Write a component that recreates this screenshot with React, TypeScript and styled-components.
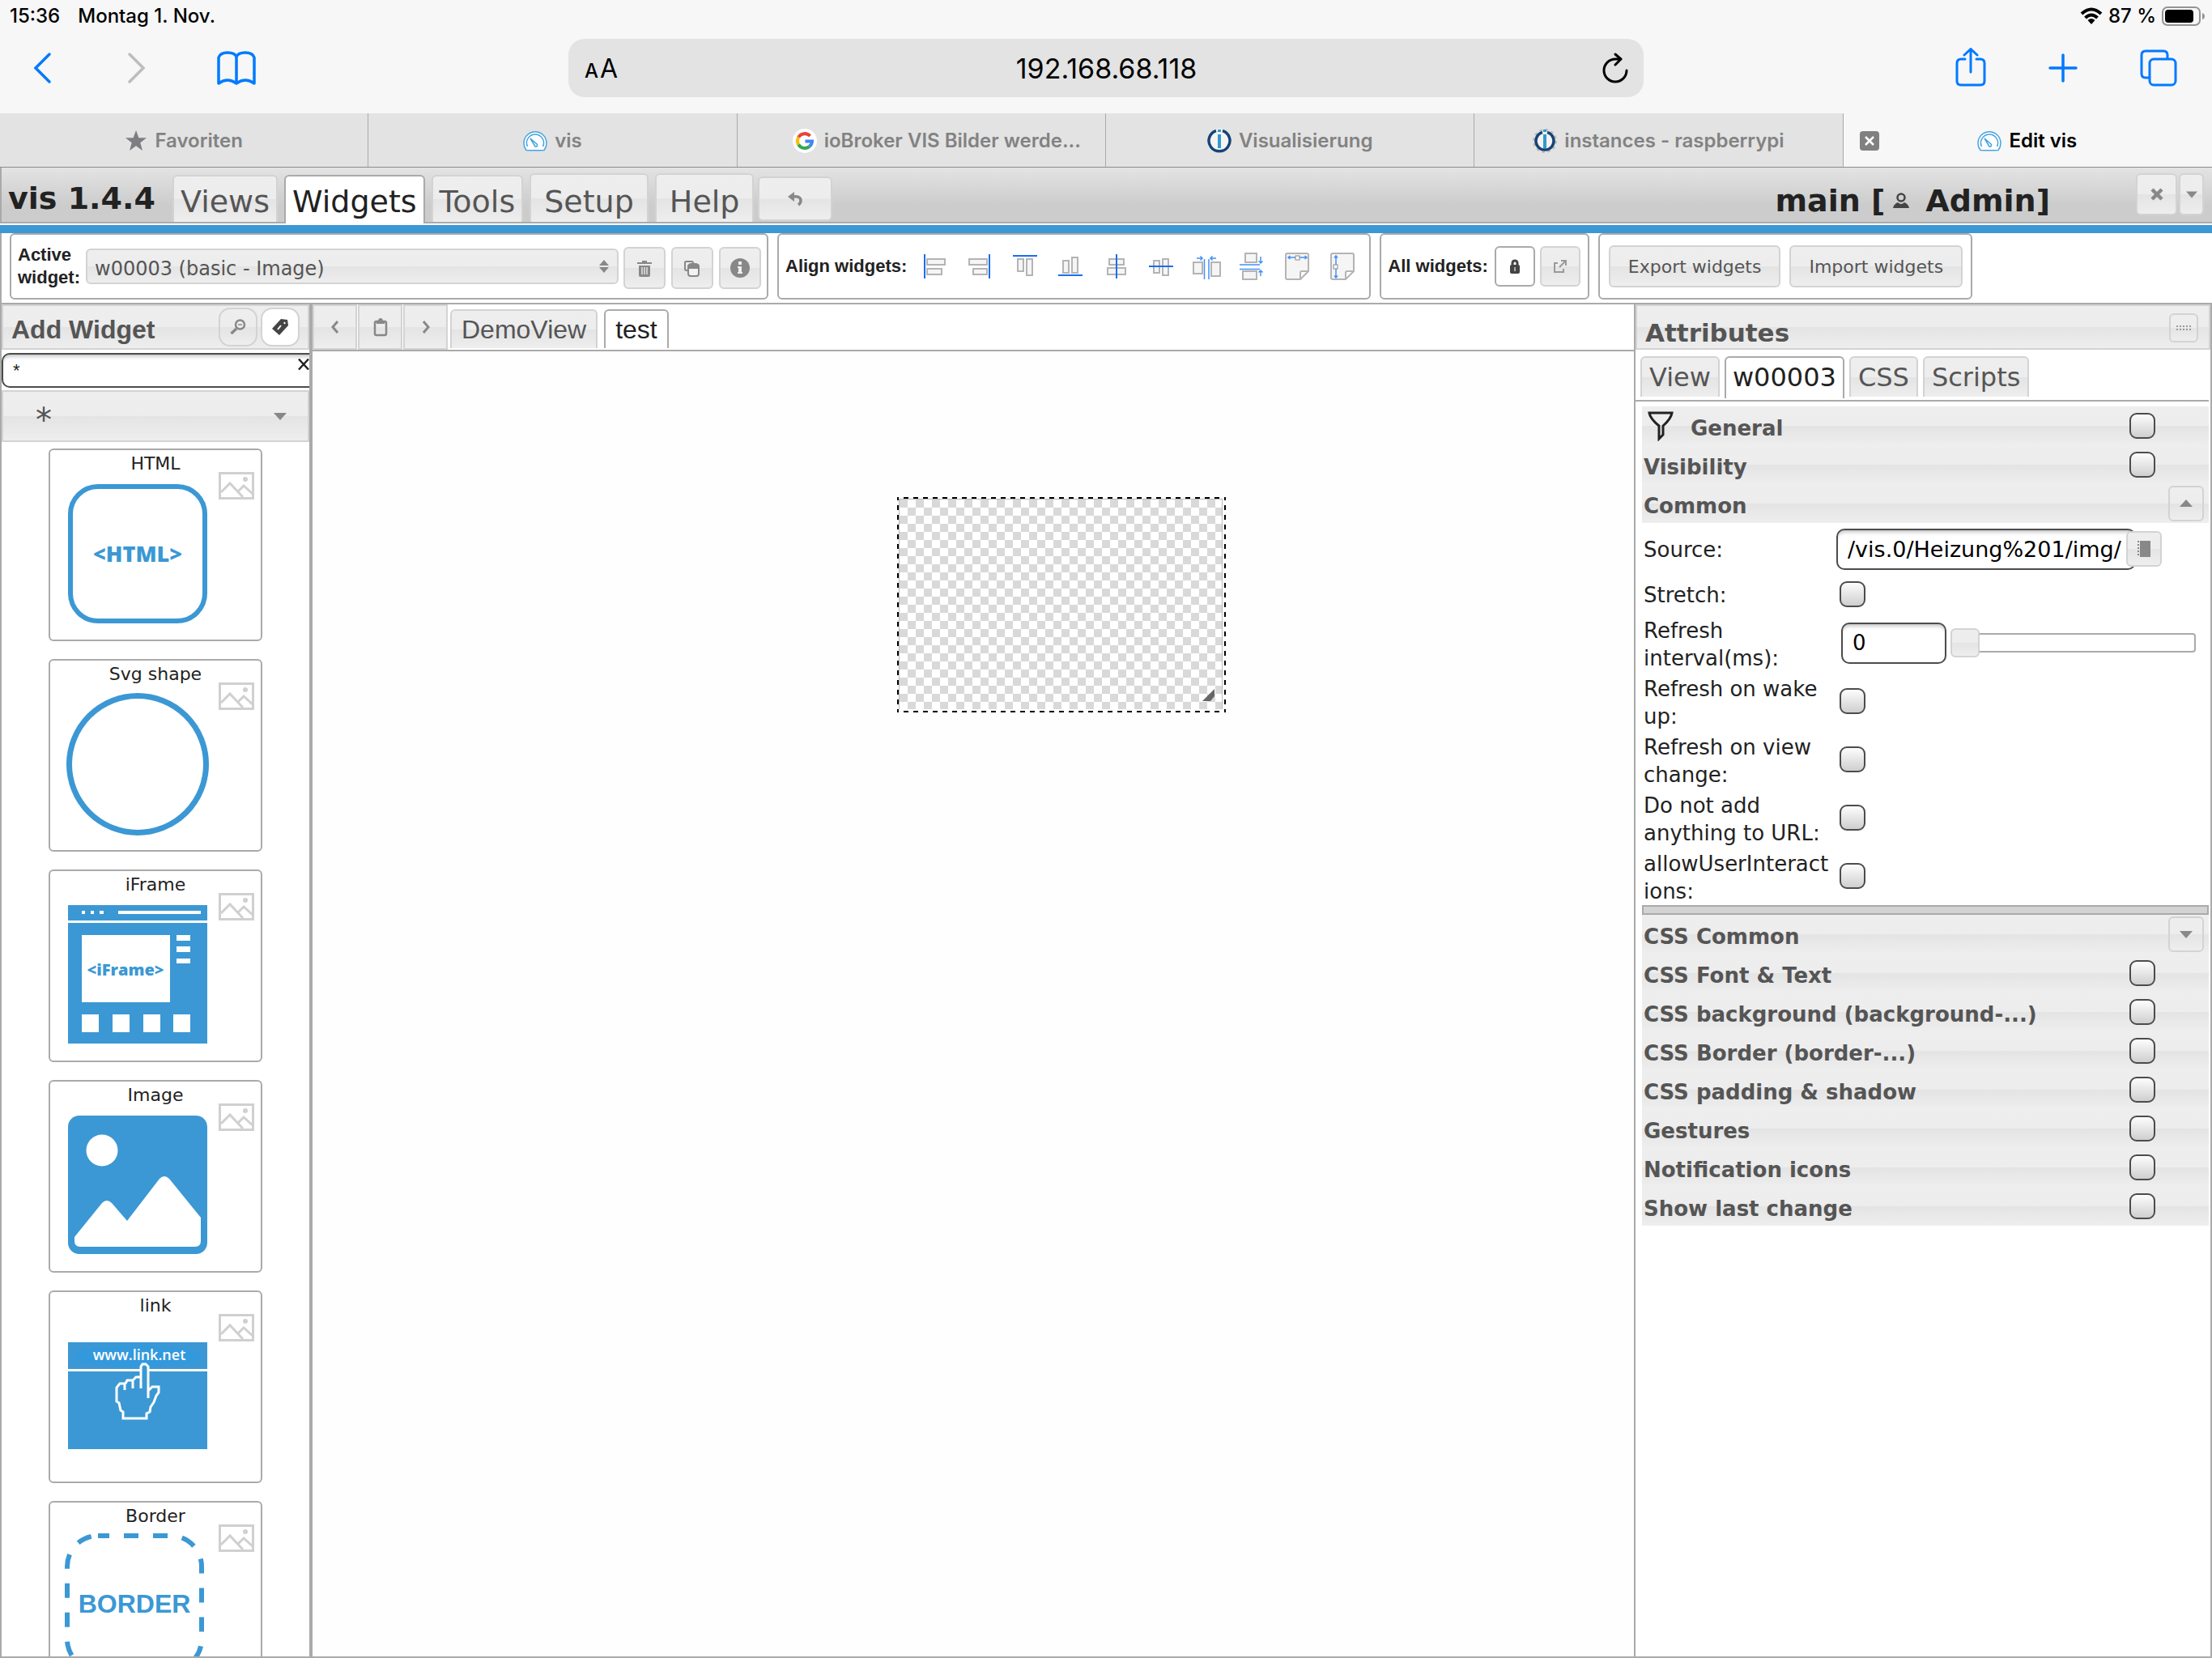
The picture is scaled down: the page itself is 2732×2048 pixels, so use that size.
import React from "react";
import styled, { createGlobalStyle, css } from "styled-components";

const verdana = `"DejaVu Sans", Verdana, sans-serif`;
const arial = `"Liberation Sans", Arial, sans-serif`;
const system = `Inter, "Noto Sans", sans-serif`;
const blue = "#007aff";
const brand = "#3b98d4";
const line = "#aaaaaa";
const softLine = "#d3d3d3";
const glass = "linear-gradient(#eeeeee 0%, #ededed 49%, #e4e4e4 51%, #eeeeee 100%)";

const GlobalStyle = createGlobalStyle`
  *, *::before, *::after { box-sizing: border-box; }
  body { margin: 0; background: #ffffff; font-family: ${verdana}; color: #222222; }
  button, input, select { margin: 0; font: inherit; color: inherit; }
  svg { display: block; flex: none; }
`;

const Page = styled.div`
  display: flex;
  flex-direction: column;
  height: 100vh;
  overflow: hidden;
`;

/* ---------- browser chrome ---------- */

const StatusBar = styled.div`
  display: flex;
  align-items: center;
  justify-content: space-between;
  height: 40px;
  padding: 0 8px 0 12px;
  background: #f7f7f7;
  color: #000000;
  font: 500 24px/40px ${system};
`;

const StatusGroup = styled.div<{ $gap: number }>`
  display: flex;
  align-items: center;
  gap: ${(p) => p.$gap}px;
`;

const BrowserBar = styled.div`
  display: grid;
  grid-template-columns: 1fr minmax(0, 1328px) 1fr;
  align-items: center;
  padding: 8px 0 20px;
  background: #f7f7f7;
`;

const BrowserActions = styled.div<{ $end?: boolean }>`
  display: flex;
  align-items: center;
  gap: ${(p) => (p.$end ? 77 : 60)}px;
  justify-content: ${(p) => (p.$end ? "flex-end" : "flex-start")};
  padding: ${(p) => (p.$end ? "0 43px 0 0" : "0 0 0 22px")};
`;

const PlainButton = styled.button`
  display: flex;
  align-items: center;
  justify-content: center;
  padding: 0;
  border: 0;
  background: none;
`;

const AddressBar = styled.div`
  display: grid;
  grid-template-columns: 60px 1fr 60px;
  align-items: center;
  height: 72px;
  padding: 0 19px 0 20px;
  border-radius: 20px;
  background: #e3e3e3;
  color: #000000;
  font-family: ${system};
`;

const TextSize = styled(PlainButton)`
  justify-content: flex-start;
  align-items: baseline;
  gap: 2px;
  font-size: 32px;
  small { font-size: 24px; font-weight: 500; }
`;

const ReloadButton = styled(PlainButton)`
  justify-content: flex-end;
`;

const AddressInput = styled.input`
  width: 100%;
  padding: 0;
  border: 0;
  outline: 0;
  background: transparent;
  text-align: center;
  font-size: 34px;
`;

const BrowserTabs = styled.nav`
  display: grid;
  grid-template-columns: repeat(6, 1fr);
  border-bottom: 1px solid #8c8c8c;
`;

const BrowserTab = styled.div<{ $active?: boolean; $long?: boolean }>`
  display: grid;
  grid-template-columns: 1fr auto 1fr;
  align-items: center;
  height: 66px;
  padding: ${(p) => (p.$long ? "2px 20px 0 58px" : "2px 20px 0")};
  border-right: 1px solid ${(p) => (p.$active ? "transparent" : "#aaaaaa")};
  background: ${(p) => (p.$active ? "#f7f7f7" : "#e3e3e3")};
  color: ${(p) => (p.$active ? "#000000" : "#828282")};
  font: 600 24px/32px ${system};
`;

const TabLink = styled.a`
  display: flex;
  grid-column: 2;
  align-items: center;
  gap: 9px;
  color: inherit;
  text-decoration: none;
  white-space: nowrap;
`;

const TabClose = styled.button`
  display: flex;
  align-items: center;
  justify-content: center;
  grid-row: 1;
  width: 24px;
  height: 24px;
  padding: 0;
  border: 0;
  border-radius: 4px;
  background: #808080;
`;

/* ---------- editor header ---------- */

const Header = styled.header`
  display: flex;
  align-items: flex-end;
  height: 69px;
  padding: 0 10px 0 8px;
  border-left: 2px solid ${line};
  border-bottom: 2px solid ${line};
  background: linear-gradient(#e3e3e3, #cccccc 70%, #cccccc);
`;

const Brand = styled.h1`
  width: 203px;
  margin: 0;
  padding-bottom: 8px;
  font-size: 38px;
  line-height: 42px;
  white-space: nowrap;
`;

const MenuTabs = styled.nav`
  display: flex;
  align-items: flex-end;
  gap: 8px;
`;

const tabSkin = css<{ $active?: boolean }>`
  border: 2px solid ${(p) => (p.$active ? line : softLine)};
  border-bottom: 0;
  border-radius: 6px 6px 0 0;
  background: ${(p) => (p.$active ? "#ffffff" : glass)};
  color: ${(p) => (p.$active ? "#212121" : "#555555")};
  white-space: nowrap;
`;

const MenuTab = styled.button<{ $active?: boolean; $wide?: boolean }>`
  ${tabSkin}
  height: ${(p) => (p.$wide ? 60 : p.$active ? 60 : 58)}px;
  margin-bottom: ${(p) => (p.$active ? -2 : 0)}px;
  padding: ${(p) => (p.$wide ? "8px 16px 0" : p.$active ? "4px 8px 0" : "6px 8px 0")};
  font-size: 38px;
  line-height: 48px;
`;

const GlassButton = styled.button<{ $w?: number; $h: number; $on?: boolean }>`
  display: flex;
  align-items: center;
  justify-content: center;
  flex: none;
  width: ${(p) => (p.$w ? p.$w + "px" : "auto")};
  height: ${(p) => p.$h}px;
  padding: 0;
  border: 2px solid ${(p) => (p.$on ? line : softLine)};
  border-radius: 6px;
  background: ${(p) => (p.$on ? "#ffffff" : glass)};
  color: #555555;
`;

const UndoSlot = styled.div`
  margin-left: 5px;
  padding-bottom: 1px;
`;

const Project = styled.div`
  display: flex;
  align-items: center;
  gap: 9px;
  margin-left: auto;
  margin-right: 106px;
  padding-bottom: 5px;
  font-size: 38px;
  font-weight: bold;
  line-height: 42px;
  white-space: nowrap;
`;

const UserName = styled.span`
  padding-left: 10px;
`;

const SplitButton = styled.div`
  display: flex;
  gap: 2px;
  padding-bottom: 8px;
`;

const BlueBar = styled.div`
  height: 10px;
  margin-top: 2px;
  background: ${brand};
`;

/* ---------- widget tool bar ---------- */

const ToolRow = styled.div`
  display: flex;
  gap: 11px;
  height: 88px;
  padding: 0 10px 4px;
  border-left: 2px solid ${line};
  border-bottom: 2px solid ${line};
`;

const ToolGroup = styled.fieldset<{ $gap: number; $pad: string }>`
  display: flex;
  align-items: center;
  gap: ${(p) => p.$gap}px;
  min-width: 0;
  margin: 0;
  padding: ${(p) => p.$pad};
  border: 2px solid ${line};
  border-radius: 6px;
`;

const ToolLabel = styled.label<{ $w?: number }>`
  width: ${(p) => (p.$w ? p.$w + "px" : "auto")};
  font: bold 22px/28px ${arial};
  white-space: ${(p) => (p.$w ? "normal" : "nowrap")};
`;

const SelectWrap = styled.div`
  display: flex;
  align-items: center;
  position: relative;
`;

const SelectArrow = styled.span<{ $right: number }>`
  position: absolute;
  right: ${(p) => p.$right}px;
  pointer-events: none;
`;

const WidgetSelect = styled.select`
  appearance: none;
  width: 658px;
  height: 44px;
  padding: 6px 40px 0 9px;
  border: 2px solid ${softLine};
  border-radius: 6px;
  background: ${glass};
  color: #555555;
  font-size: 24px;
`;

const ButtonRow = styled.div<{ $gap: number; $top?: number }>`
  display: flex;
  gap: ${(p) => p.$gap}px;
  padding-top: ${(p) => p.$top ?? 0}px;
`;

const TextButton = styled(GlassButton)`
  padding: 0 22px;
  font-size: 22px;
`;

/* ---------- workspace ---------- */

const Workspace = styled.main`
  display: grid;
  grid-template-columns: 386px minmax(0, 1fr) 714px;
  flex: 1;
  min-height: 0;
  border-bottom: 2px solid ${line};
`;

const LeftPanel = styled.aside`
  display: flex;
  flex-direction: column;
  min-height: 0;
  overflow: hidden;
  border-left: 2px solid ${line};
  border-right: 4px solid ${line};
`;

const PanelHeader = styled.div<{ $pad: string }>`
  display: flex;
  align-items: center;
  flex: none;
  height: 56px;
  padding: ${(p) => p.$pad};
  border: 2px solid ${softLine};
  background: ${glass};
  color: #555555;
`;

const PanelTitle = styled.h2<{ $font: string; $size: number; $top: number }>`
  margin: 0 auto 0 0;
  padding-top: ${(p) => p.$top}px;
  font: bold ${(p) => p.$size}px/36px ${(p) => p.$font};
`;

const RoundButton = styled(GlassButton)<{ $pressed?: boolean }>`
  border-radius: 14px;
  background: ${(p) => (p.$pressed ? "#ffffff" : glass)};
`;

const SearchBox = styled.div`
  position: relative;
  flex: none;
  height: 50px;
  padding-top: 4px;
  overflow: hidden;
`;

const fieldSkin = css`
  border: 2px solid #4c4c4c;
  border-radius: 10px;
  outline: 0;
  background: #ffffff;
  box-shadow: inset 0 5px 5px -3px #bbbbbb;
`;

const SearchInput = styled.input`
  ${fieldSkin}
  width: calc(100% + 16px);
  height: 43px;
  padding: 0 12px;
  font: 22px/36px ${arial};
`;

const ClearButton = styled(PlainButton)`
  position: absolute;
  top: 10px;
  right: 0;
`;

const GroupSelect = styled.select`
  appearance: none;
  width: 100%;
  height: 64px;
  padding: 10px 40px 0 40px;
  border: 2px solid ${softLine};
  border-radius: 0;
  background: ${glass};
  color: #555555;
  font-size: 40px;
`;

const CardList = styled.div`
  display: flex;
  flex-direction: column;
  align-items: center;
  gap: 22px;
  flex: 1;
  min-height: 0;
  padding-top: 8px;
  overflow: hidden;
`;

const Card = styled.article`
  flex: none;
  width: 264px;
  height: 238px;
  padding-top: 3px;
  border: 2px solid ${line};
  border-radius: 6px;
`;

const CardTitle = styled.h3`
  margin: 0;
  font-size: 22px;
  font-weight: normal;
  line-height: 28px;
  text-align: center;
`;

const CardBody = styled.div`
  display: flex;
  gap: 10px;
  padding: 0 10px 0 18px;
  & > svg:first-child { margin-top: 7px; }
  & > svg:last-child { margin-top: -4px; }
`;

const Center = styled.section`
  display: flex;
  flex-direction: column;
  min-width: 0;
`;

const ViewBar = styled.div`
  display: flex;
  align-items: flex-start;
  height: 58px;
  border-bottom: 2px solid ${line};
`;

const ViewButton = styled(GlassButton)`
  border-radius: 0;
  margin-right: 1px;
`;

const ViewTabs = styled.nav`
  display: flex;
  gap: 8px;
  padding: 6px 0 0 2px;
`;

const ViewTab = styled.button<{ $active?: boolean }>`
  ${tabSkin}
  height: 48px;
  padding: 0 12px;
  font: 32px/46px ${arial};
`;

const Canvas = styled.div`
  position: relative;
  flex: 1;
  background: #fefefe;
`;

const dashX = "repeating-linear-gradient(90deg, #000000 0 6px, transparent 6px 12px)";
const dashY = "repeating-linear-gradient(#000000 0 6px, transparent 6px 12px)";

const SelectedWidget = styled.div`
  position: absolute;
  left: 722px;
  top: 180px;
  width: 406px;
  height: 266px;
  padding: 2px 4px 4px 2px;
  background:
    ${dashX} -4px 0 / 420px 2px no-repeat,
    ${dashX} -4px 100% / 420px 2px no-repeat,
    ${dashY} 0 -2px / 2px 276px no-repeat,
    ${dashY} 100% -2px / 2px 276px no-repeat;
`;

const Checker = styled.div`
  display: flex;
  align-items: flex-end;
  justify-content: flex-end;
  height: 100%;
  padding: 10px 9px;
  border: 1px solid #bbbbbb;
  border-bottom: 0;
  background: repeating-conic-gradient(#ffffff 0 25%, #d9d9d9 0 50%) 0 0 / 20px 20px;
`;

/* ---------- attributes ---------- */

const RightPanel = styled.aside`
  border-left: 2px solid ${line};
  border-right: 2px solid ${line};
`;

const AttributeTabs = styled.nav`
  display: flex;
  gap: 6px;
  height: 64px;
  margin-right: 2px;
  padding: 8px 0 0 6px;
  border-bottom: 2px solid ${line};
`;

const AttributeTab = styled.button<{ $active?: boolean }>`
  ${tabSkin}
  height: ${(p) => (p.$active ? 52 : 50)}px;
  padding: ${(p) => (p.$active ? "0 8px 2px" : "0 9px")};
  font-size: 32px;
  line-height: 48px;
`;

const Sections = styled.div`
  padding: 6px 2px 0 8px;
  font-size: 26px;
`;

const SectionRow = styled.div`
  display: flex;
  align-items: center;
  height: 48px;
  padding: 0 6px 0 2px;
  background: ${glass};
  color: #555555;
  font-weight: bold;
`;

const SectionLabel = styled.label`
  flex: 1;
  padding-top: 6px;
  line-height: 34px;
`;

const Funnel = styled.span`
  padding: 0 20px 0 4px;
`;

const CheckBox = styled.input`
  appearance: none;
  flex: none;
  width: 32px;
  height: 32px;
  border: 2px solid #4c4c4c;
  border-radius: 9px;
  background: linear-gradient(#fdfdfd, #cfcfcf);
`;

const SectionCheck = styled(CheckBox)`
  margin-right: 60px;
`;

const FieldRow = styled.div<{ $h: number }>`
  display: grid;
  grid-template-columns: 238px 1fr;
  align-items: center;
  min-height: ${(p) => p.$h}px;
  padding-left: 2px;
`;

const FieldLabel = styled.label<{ $two?: boolean }>`
  max-width: 232px;
  padding-top: ${(p) => (p.$two ? 4 : 1)}px;
  line-height: 34px;
  overflow-wrap: anywhere;
`;

const FieldControls = styled.div<{ $left: number }>`
  display: flex;
  align-items: center;
  padding-left: ${(p) => p.$left}px;
`;

const SourceInput = styled.input`
  ${fieldSkin}
  width: 370px;
  height: 51px;
  padding: 0 12px 0 12px;
  color: #000000;
  font-size: 27px;
`;

const BrowseSlot = styled.div`
  position: relative;
  margin-left: -12px;
`;

const NumberInput = styled.input`
  ${fieldSkin}
  width: 130px;
  height: 51px;
  margin-right: 5px;
  padding: 0 12px;
  color: #000000;
`;

const Slider = styled.input`
  appearance: none;
  flex: 1;
  min-width: 0;
  height: 36px;
  margin-right: 16px;
  background: transparent;
  &::-webkit-slider-runnable-track {
    height: 24px;
    border: 2px solid ${line};
    border-radius: 4px;
    background: #ffffff;
  }
  &::-webkit-slider-thumb {
    appearance: none;
    width: 36px;
    height: 36px;
    margin: -8px 0 0 -2px;
    border: 2px solid ${softLine};
    border-radius: 6px;
    background: ${glass};
  }
`;

const Divider = styled.hr`
  height: 12px;
  margin: 0;
  border: 2px solid ${line};
  background: ${softLine};
`;

/* ---------- drawings ---------- */

const Gauge = () => (
  <svg width="30" height="26" viewBox="0 0 30 26" fill="none" stroke="#45a3e0" strokeWidth="1.5">
    <path fill="#ffffff" d="M4 24.500A14 14 0 1 1 26 24.500Q15 25 4 24.500Z" />
    <path d="M5.500 20A10.500 10.500 0 1 1 24.500 20" />
    <path d="M9 10L17.500 17.500Q18 20.500 15 20Z" />
  </svg>
);

const Google = () => (
  <svg width="30" height="30" viewBox="0 0 30 30" fill="none" strokeWidth="4">
    <circle cx="15" cy="15" r="15" fill="#ffffff" />
    <path stroke="#ea4335" d="M7.200 10.500A9 9 0 0 1 21.500 9" />
    <path stroke="#fbbc05" d="M7.200 10.500A9 9 0 0 0 7.200 19.500" />
    <path stroke="#34a853" d="M7.200 19.500A9 9 0 0 0 20.800 21.900" />
    <path stroke="#4285f4" d="M20.800 21.900A9 9 0 0 0 24 15.500H15.500" />
  </svg>
);

const IoBroker = ({ gear }: { gear?: boolean }) => (
  <svg width="30" height="30" viewBox="0 0 30 30" fill="none">
    {gear && <circle cx="15" cy="15" r="13.500" stroke="#bcbcbc" strokeWidth="3" strokeDasharray="3.500 3.570" />}
    <circle cx="15" cy="15" r={gear ? 12.500 : 15} fill="#f4f4f4" />
    <path
      stroke="#164477"
      strokeWidth="3.500"
      d={gear ? "M12 4.500A11 11 0 1 0 18 4.500" : "M11 2.500A13 13 0 1 0 19 2.500"}
    />
    <path stroke="#3399cc" strokeWidth="4" d="M15 1V4M15 7V24" />
  </svg>
);

const ImageMark = () => (
  <svg width="44" height="34" viewBox="0 0 44 34" fill="none" stroke="#d0d0d0" strokeWidth="3">
    <rect x="1.500" y="1.500" width="41" height="31" />
    <path d="M3 25L14 14L30 31M24 24L31 17L42 27" />
    <circle cx="33" cy="9" r="3" fill="#d0d0d0" stroke="none" />
  </svg>
);

const art = { width: 180, height: 180, viewBox: "0 0 180 180" };
const artFont = `"Open Sans", "Noto Sans", sans-serif`;

const HtmlArt = () => (
  <svg {...art}>
    <rect x="7" y="7" width="166" height="166" rx="34" fill="none" stroke={brand} strokeWidth="6" />
    <text x="90" y="100" textAnchor="middle" fontFamily={artFont} fontWeight="800" fontSize="27" fill={brand}>
      &lt;HTML&gt;
    </text>
  </svg>
);

const CircleArt = () => (
  <svg {...art}>
    <circle cx="90" cy="90" r="84.500" fill="none" stroke={brand} strokeWidth="7" />
  </svg>
);

const FrameArt = () => (
  <svg {...art}>
    <path fill={brand} d="M4 4H176V23H4ZM4 26H176V175H4Z" />
    <path
      fill="#ffffff"
      d="M21 11h4v4h-4zM32 11h4v4h-4zM43 11h5v4h-5zM66 11h102v4h-102zM21 41h109v83h-109zM138 41h17v7h-17zM138 55h17v7h-17zM138 70h17v6h-17zM21 139h21v22h-21zM59 139h21v22h-21zM97 139h21v22h-21zM134 139h21v22h-21z"
    />
    <text x="75" y="91" textAnchor="middle" fontFamily={artFont} fontWeight="800" fontSize="20" fill={brand}>
      &lt;iFrame&gt;
    </text>
  </svg>
);

const PictureArt = () => (
  <svg {...art}>
    <rect x="4" y="4" width="172" height="171" rx="14" fill={brand} />
    <circle cx="46" cy="47" r="19.500" fill="#ffffff" />
    <path
      fill="#ffffff"
      d="M12 154L46 112Q52 106 58 112L77 134L117 82Q123 76 129 82L168 130V159Q168 166 161 166H19Q12 166 12 159Z"
    />
  </svg>
);

const LinkArt = () => (
  <svg {...art}>
    <path fill={brand} d="M4 24H176V57H4ZM4 60H176V156H4Z" />
    <ellipse cx="90" cy="41" rx="80" ry="13" fill="#3399dd" />
    <text x="92" y="46" textAnchor="middle" fontFamily={artFont} fontWeight="600" fontSize="18" fill="#ffffff">
      www.link.net
    </text>
    <path
      fill={brand}
      stroke="#ffffff"
      strokeWidth="3"
      d="M94 81V54L96 51H100L103 54V93M103 84L108 79H116V86L113 90L110 98L106 104L105 110L101 112V118H72V110L69 108L67 99L64 97V80L68 75H74V83M75 75L77 71H84V81M84 71L88 67H94"
    />
  </svg>
);

const BorderArt = () => (
  <svg {...art}>
    <rect
      x="3"
      y="3"
      width="166"
      height="166"
      rx="38"
      fill="none"
      stroke={brand}
      strokeWidth="6"
      strokeDasharray="18 18"
      strokeDashoffset="4"
    />
    <text x="86" y="98" textAnchor="middle" fontFamily={arial} fontWeight="bold" fontSize="32" fill={brand}>
      BORDER
    </text>
  </svg>
);

const alignBox = { fill: "#f5f5f5", stroke: "#b4b4b4", strokeWidth: 2 };
const sheet = "M4 4Q4 2 6 2H30Q32 2 32 4V24L22 34H6Q4 34 4 32ZM32 24H24Q22 24 22 26V34";
const alignTools: { name: string; grey: string; blue: string; thin?: boolean }[] = [
  { name: "Align left", grey: "M9 9H31V16H9ZM9 21H27V28H9Z", blue: "M6 3V33" },
  { name: "Align right", grey: "M5 9H27V16H5ZM10 21H27V28H10Z", blue: "M30 3V33" },
  { name: "Align top", grey: "M9 9H16V24H9ZM20 9H27V29H20Z", blue: "M3 5H33" },
  { name: "Align bottom", grey: "M9 11H16V26H9ZM20 7H27V26H20Z", blue: "M3 29H33" },
  { name: "Center horizontally", grey: "M10 9H28V16H10ZM8 20H30V28H8Z", blue: "M19 3V33" },
  { name: "Center vertically", grey: "M9 11H16V26H9ZM20 9H27V29H20Z", blue: "M3 18H33" },
  {
    name: "Distribute horizontally",
    grey: "M2 13H13V27H2ZM24 13H35V30H24Z",
    blue: "M15.500 9V34M21 9V34M6 8H13M10.500 5.500L13 8L10.500 10.500M30 8H23M25.500 5.500L23 8L25.500 10.500",
    thin: true,
  },
  {
    name: "Distribute vertically",
    grey: "M10 2H24V13H10ZM7 24H24V34H7Z",
    blue: "M3 16H28M3 21.500H28M29 6V14M26.500 11.500L29 14L31.500 11.500M29 30V23M26.500 25.500L29 23L31.500 25.500",
    thin: true,
  },
  { name: "Same width", grey: sheet, blue: "M7 7H30M9.500 5L7 7L9.500 9M27.500 5L30 7L27.500 9", thin: true },
  { name: "Same height", grey: sheet, blue: "M10 5V32M8 7.500L10 5L12 7.500M8 29.500L10 32L12 29.500", thin: true },
];

const glyph = "#888888";

const Trash = () => (
  <svg width="20" height="24" viewBox="0 0 20 24" fill={glyph}>
    <path d="M1 5H7V3H13V5H19V7H1ZM3 9H17V21Q17 23 15 23H5Q3 23 3 21Z" />
    <path d="M7 11V20M10 11V20M13 11V20" stroke="#e2e2e2" strokeWidth="1.500" />
  </svg>
);

const Copy = () => (
  <svg width="22" height="24" viewBox="0 0 22 24" fill="none" stroke={glyph} strokeWidth="2">
    <path d="M6 15H4Q2 15 2 13V5Q2 4 4 4H10Q12 4 12 6" />
    <rect x="6" y="8" width="13" height="14" rx="3" fill="#f2f2f2" />
    <path fill={glyph} stroke="none" d="M5 13V9Q7 6 9 6H16Q20 7 20 10V13Z" />
  </svg>
);

const Info = () => (
  <svg width="26" height="26" viewBox="0 0 26 26">
    <circle cx="13" cy="13" r="12" fill={glyph} />
    <path fill="#eeeeee" d="M11 5H15V9H11ZM10 11H15V18H16V20H10V18H11V13H10Z" />
  </svg>
);

const Undo = () => (
  <svg width="20" height="20" viewBox="0 0 20 20" fill="none">
    <path fill={glyph} d="M1 7L9 1V13Z" />
    <path stroke={glyph} strokeWidth="3.500" d="M8 7Q17 6 17 12Q17 15 14 17" />
  </svg>
);

const Triangle = ({ up, size = 16 }: { up?: boolean; size?: number }) => (
  <svg width={size} height="10" viewBox="0 0 16 10">
    <path fill={glyph} d={up ? "M0 9L8 0L16 9Z" : "M0 1H16L8 10Z"} />
  </svg>
);

const Chevron = ({ right }: { right?: boolean }) => (
  <svg width="12" height="18" viewBox="0 0 12 18" fill="none" stroke={glyph} strokeWidth="3">
    <path d={right ? "M3 2L9 9L3 16" : "M9 2L3 9L9 16"} />
  </svg>
);

const browserTabs: { title: string; icon: React.ReactNode; active?: boolean; long?: boolean }[] = [
  {
    title: "Favoriten",
    icon: (
      <svg width="28" height="26" viewBox="0 0 28 26" fill="#7d7d82">
        <path d="M14 0L17.400 9.300H27L19.300 15.300L22 25L14 19.300L6 25L8.700 15.300L1 9.300H10.600Z" />
      </svg>
    ),
  },
  { title: "vis", icon: <Gauge /> },
  { title: "ioBroker VIS Bilder werde...", icon: <Google />, long: true },
  { title: "Visualisierung", icon: <IoBroker /> },
  { title: "instances - raspberrypi", icon: <IoBroker gear /> },
  { title: "Edit vis", icon: <Gauge />, active: true },
];

const menu = [
  { title: "Views" },
  { title: "Widgets", active: true },
  { title: "Tools" },
  { title: "Setup", wide: true },
  { title: "Help", wide: true },
];

const widgets = [
  { title: "HTML", Art: HtmlArt },
  { title: "Svg shape", Art: CircleArt },
  { title: "iFrame", Art: FrameArt },
  { title: "Image", Art: PictureArt },
  { title: "link", Art: LinkArt },
  { title: "Border", Art: BorderArt },
];

const wideFields = [
  { id: "wake", title: "Refresh on wake up:" },
  { id: "view-change", title: "Refresh on view change:" },
  { id: "no-suffix", title: "Do not add anything to URL:" },
  { id: "interactions", title: "allowUserInteractions:" },
];

const closedSections = [
  "CSS Font & Text",
  "CSS background (background-...)",
  "CSS Border (border-...)",
  "CSS padding & shadow",
  "Gestures",
  "Notification icons",
  "Show last change",
];

function CheckSection({ title, funnel }: { title: string; funnel?: boolean }) {
  const id = "section-" + title.replace(/\W+/g, "-").toLowerCase();
  return (
    <SectionRow>
      {funnel && (
        <Funnel>
          <svg width="34" height="38" viewBox="0 0 34 38" fill="none" stroke="#222222" strokeWidth="3">
            <path d="M3 3H31Q30 10 20 19V30L15 35V19Q4 10 3 3Z" />
          </svg>
        </Funnel>
      )}
      <SectionLabel htmlFor={id}>{title}</SectionLabel>
      <SectionCheck type="checkbox" id={id} />
    </SectionRow>
  );
}

function BrowserChrome() {
  return (
    <>
      <StatusBar>
        <StatusGroup $gap={22}>
          <span>15:36</span>
          <span>Montag 1. Nov.</span>
        </StatusGroup>
        <StatusGroup $gap={7}>
          <svg width="28" height="22" viewBox="0 0 28 22" fill="none" stroke="#000000" strokeWidth="4">
            <path d="M2 8Q14 -3 26 8M6.500 13Q14 6 21.500 13" />
            <path fill="#000000" stroke="none" d="M9.500 16Q14 12 18.500 16L14 21Z" />
          </svg>
          <span>87 %</span>
          <svg width="54" height="24" viewBox="0 0 54 24" fill="none">
            <rect x="1" y="1" width="46" height="22" rx="6" stroke="#949494" strokeWidth="2" />
            <rect x="4" y="4" width="35" height="16" rx="4" fill="#000000" />
            <path fill="#949494" d="M50 8Q53 9 53 12T50 16Z" />
          </svg>
        </StatusGroup>
      </StatusBar>
      <BrowserBar>
        <BrowserActions>
          <PlainButton aria-label="Back">
            <svg width="60" height="44" viewBox="0 0 60 44" fill="none" stroke={blue} strokeWidth="3.500" strokeLinecap="round">
              <path d="M39 5L22 22L39 39" />
            </svg>
          </PlainButton>
          <PlainButton aria-label="Forward">
            <svg width="60" height="44" viewBox="0 0 60 44" fill="none" stroke="#bdbdbd" strokeWidth="3.500" strokeLinecap="round">
              <path d="M18 5L35 22L18 39" />
            </svg>
          </PlainButton>
          <PlainButton aria-label="Bookmarks">
            <svg width="60" height="44" viewBox="0 0 60 44" fill="none" stroke={blue} strokeWidth="3.500" strokeLinejoin="round">
              <path d="M30 41Q19 33 8 41V9Q10 3 19 3T30 8Q32 3 41 3T52 9V41Q41 33 30 41ZM30 8V41" />
            </svg>
          </PlainButton>
        </BrowserActions>
        <AddressBar>
          <TextSize aria-label="Text size">
            <small>A</small>A
          </TextSize>
          <AddressInput aria-label="Address" defaultValue="192.168.68.118" />
          <ReloadButton aria-label="Reload">
            <svg width="32" height="38" viewBox="0 0 32 38" fill="none" stroke="#000000" strokeWidth="3" strokeLinecap="round" strokeLinejoin="round">
              <path d="M30 22A14 14 0 1 1 16 8H23M16 2L23 8L16 15" />
            </svg>
          </ReloadButton>
        </AddressBar>
        <BrowserActions $end>
          <PlainButton aria-label="Share">
            <svg width="38" height="50" viewBox="0 0 38 50" fill="none" stroke={blue} strokeWidth="3" strokeLinecap="round" strokeLinejoin="round">
              <path d="M12 14H7Q2 14 2 19V41Q2 46 7 46H31Q36 46 36 41V19Q36 14 31 14H26M19 30V2M11 9L19 1.500L27 9" />
            </svg>
          </PlainButton>
          <PlainButton aria-label="New tab">
            <svg width="36" height="36" viewBox="0 0 36 36" stroke={blue} strokeWidth="3.500" strokeLinecap="round">
              <path d="M18 2V34M2 18H34" />
            </svg>
          </PlainButton>
          <PlainButton aria-label="Tabs">
            <svg width="46" height="46" viewBox="0 0 46 46" fill="none" stroke={blue} strokeWidth="3">
              <path d="M12 35H7Q2 35 2 30V7Q2 2 7 2H29Q34 2 34 7V12" />
              <rect x="12" y="12" width="32" height="32" rx="5" />
            </svg>
          </PlainButton>
        </BrowserActions>
      </BrowserBar>
      <BrowserTabs aria-label="Browser tabs">
        {browserTabs.map((tab) => (
          <BrowserTab key={tab.title} $active={tab.active} $long={tab.long}>
            {tab.active && (
              <TabClose aria-label="Close tab">
                <svg width="12" height="12" viewBox="0 0 12 12" stroke="#ffffff" strokeWidth="2.500">
                  <path d="M1 1L11 11M11 1L1 11" />
                </svg>
              </TabClose>
            )}
            <TabLink href="#">
              {tab.icon}
              {tab.title}
            </TabLink>
          </BrowserTab>
        ))}
      </BrowserTabs>
    </>
  );
}

function EditorHeader() {
  return (
    <Header>
      <Brand>vis 1.4.4</Brand>
      <MenuTabs>
        {menu.map((item) => (
          <MenuTab key={item.title} $active={item.active} $wide={item.wide}>
            {item.title}
          </MenuTab>
        ))}
      </MenuTabs>
      <UndoSlot>
        <GlassButton $w={92} $h={55} aria-label="Undo">
          <Undo />
        </GlassButton>
      </UndoSlot>
      <Project>
        <span>main [</span>
        <svg width="22" height="20" viewBox="0 0 22 20" fill="none" stroke="#444444" strokeWidth="2.500">
          <circle cx="11" cy="6" r="4.500" />
          <path fill="#444444" stroke="none" d="M1 19Q2 14 7 12Q11 16 15 12Q20 14 21 19Z" />
        </svg>
        <UserName>Admin]</UserName>
      </Project>
      <SplitButton>
        <GlassButton $w={51} $h={52} aria-label="Close editor">
          <svg width="16" height="16" viewBox="0 0 16 16" stroke={glyph} strokeWidth="4.500">
            <path d="M2 2L14 14M14 2L2 14" />
          </svg>
        </GlassButton>
        <GlassButton $w={31} $h={52} aria-label="More">
          <Triangle size={14} />
        </GlassButton>
      </SplitButton>
    </Header>
  );
}

function WidgetTools() {
  return (
    <ToolRow>
      <ToolGroup $gap={6} $pad="0 7px 0 8px">
        <ToolLabel htmlFor="active-widget" $w={78}>
          Active widget:
        </ToolLabel>
        <SelectWrap>
          <WidgetSelect id="active-widget" defaultValue="w00003">
            <option value="w00003">w00003 (basic - Image)</option>
          </WidgetSelect>
          <SelectArrow $right={12}>
            <svg width="12" height="16" viewBox="0 0 12 16" fill={glyph}>
              <path d="M0 7L6 0L12 7ZM0 9H12L6 16Z" />
            </svg>
          </SelectArrow>
        </SelectWrap>
        <ButtonRow $gap={7} $top={4}>
          <GlassButton $w={52} $h={52} aria-label="Delete widget">
            <Trash />
          </GlassButton>
          <GlassButton $w={52} $h={52} aria-label="Copy widget">
            <Copy />
          </GlassButton>
          <GlassButton $w={52} $h={52} aria-label="Widget information">
            <Info />
          </GlassButton>
        </ButtonRow>
      </ToolGroup>
      <ToolGroup $gap={16} $pad="0 15px 0 8px">
        <ToolLabel as="span">Align widgets:</ToolLabel>
        <ButtonRow $gap={20}>
          {alignTools.map((tool) => (
            <PlainButton key={tool.name} aria-label={tool.name}>
              <svg width="36" height="36" viewBox="0 0 36 36" fill="none">
                <path d={tool.grey} {...alignBox} />
                <path d={tool.blue} stroke={tool.thin ? "#4590f5" : "#1a6ef0"} strokeWidth={tool.thin ? 1.5 : 2} />
                {tool.name === "Same width" && <rect x="16" y="5" width="5" height="5" fill="#ffffff" stroke="#888888" />}
                {tool.name === "Same height" && <rect x="7" y="16" width="5" height="5" fill="#ffffff" stroke="#888888" />}
              </svg>
            </PlainButton>
          ))}
        </ButtonRow>
      </ToolGroup>
      <ToolGroup $gap={8} $pad="0 9px 0 8px">
        <ToolLabel as="span">All widgets:</ToolLabel>
        <ButtonRow $gap={6}>
          <GlassButton $w={50} $h={50} $on aria-label="Lock widgets">
            <svg width="14" height="20" viewBox="0 0 14 20">
              <path d="M4 9V6Q4 3 7 3T10 6V9" fill="none" stroke="#444444" strokeWidth="3" />
              <rect x="1" y="8" width="12" height="11" rx="2" fill="#444444" />
              <path d="M7 11V16" stroke="#aaaaaa" strokeWidth="2" />
            </svg>
          </GlassButton>
          <GlassButton $w={50} $h={50} aria-label="Open widgets">
            <svg width="18" height="18" viewBox="0 0 18 18" fill="none" stroke="#999999" strokeWidth="2">
              <path d="M6 5H2V16H13V12M10 2H16V8M16 2L8 10" />
            </svg>
          </GlassButton>
        </ButtonRow>
      </ToolGroup>
      <ToolGroup $gap={11} $pad="0 10px 0 11px">
        <TextButton $h={52}>Export widgets</TextButton>
        <TextButton $h={52}>Import widgets</TextButton>
      </ToolGroup>
    </ToolRow>
  );
}

function WidgetPalette() {
  return (
    <LeftPanel>
      <PanelHeader $pad="0 10px 0 10px">
        <PanelTitle $font={arial} $size={32} $top={5}>
          Add Widget
        </PanelTitle>
        <ButtonRow $gap={4}>
          <RoundButton $w={48} $h={48} aria-label="Zoom out">
            <svg width="20" height="20" viewBox="0 0 20 20" fill="none" stroke={glyph} strokeWidth="2.500">
              <circle cx="12.500" cy="7" r="5.500" />
              <path d="M10 7H15" strokeWidth="1.500" />
              <path d="M8 12L1.500 18" strokeWidth="3.500" />
            </svg>
          </RoundButton>
          <RoundButton $w={48} $h={48} $pressed aria-label="Filter by tag">
            <svg width="22" height="22" viewBox="0 0 22 22">
              <path fill="#444444" d="M12 1L20 2L21 9L10 21L1 13Z" />
              <path stroke="#ffffff" strokeWidth="2" fill="none" d="M8 14L12 9M16 5L17 7" />
            </svg>
          </RoundButton>
        </ButtonRow>
      </PanelHeader>
      <SearchBox>
        <SearchInput aria-label="Filter widgets" defaultValue="*" />
        <ClearButton aria-label="Clear filter">
          <svg width="14" height="16" viewBox="0 0 14 16" stroke="#222222" strokeWidth="2.500">
            <path d="M1 1.500L13 14.500M13 1.500L1 14.500" />
          </svg>
        </ClearButton>
      </SearchBox>
      <SelectWrap>
        <GroupSelect aria-label="Widget set" defaultValue="*">
          <option>*</option>
        </GroupSelect>
        <SelectArrow $right={28}>
          <Triangle />
        </SelectArrow>
      </SelectWrap>
      <CardList>
        {widgets.map(({ title, Art }) => (
          <Card key={title}>
            <CardTitle>{title}</CardTitle>
            <CardBody>
              <Art />
              <ImageMark />
            </CardBody>
          </Card>
        ))}
      </CardList>
    </LeftPanel>
  );
}

function ViewEditor() {
  return (
    <Center>
      <ViewBar>
        <ViewButton $w={55} $h={56} aria-label="Previous view">
          <Chevron />
        </ViewButton>
        <ViewButton $w={55} $h={56} aria-label="Paste">
          <svg width="18" height="24" viewBox="0 0 18 24" fill="none" stroke={glyph} strokeWidth="2.500">
            <rect x="2" y="5" width="14" height="17" rx="2" />
            <path fill={glyph} stroke="none" d="M4 8V5H6Q6 1 9 1T12 5H14V8Z" />
          </svg>
        </ViewButton>
        <ViewButton $w={55} $h={56} aria-label="Next view">
          <Chevron right />
        </ViewButton>
        <ViewTabs>
          <ViewTab>DemoView</ViewTab>
          <ViewTab $active>test</ViewTab>
        </ViewTabs>
      </ViewBar>
      <Canvas>
        <SelectedWidget>
          <Checker>
            <svg width="15" height="15" viewBox="0 0 15 15">
              <path d="M15 0V9L10 15H0Z" fill="#666666" />
            </svg>
          </Checker>
        </SelectedWidget>
      </Canvas>
    </Center>
  );
}

function Attributes() {
  return (
    <RightPanel>
      <PanelHeader $pad="2px 13px 0 10px">
        <PanelTitle $font={verdana} $size={31} $top={12}>
          Attributes
        </PanelTitle>
        <GlassButton $w={36} $h={36} aria-label="Dock panel">
          <svg width="20" height="8" viewBox="0 0 20 8" stroke="#999999" strokeWidth="2" strokeDasharray="2 2">
            <path d="M1 2H19M1 6H19" />
          </svg>
        </GlassButton>
      </PanelHeader>
      <AttributeTabs>
        <AttributeTab>View</AttributeTab>
        <AttributeTab $active>w00003</AttributeTab>
        <AttributeTab>CSS</AttributeTab>
        <AttributeTab>Scripts</AttributeTab>
      </AttributeTabs>
      <Sections>
        <CheckSection title="General" funnel />
        <CheckSection title="Visibility" />
        <SectionRow>
          <SectionLabel as="span">Common</SectionLabel>
          <GlassButton $w={44} $h={44} aria-label="Collapse Common">
            <Triangle up />
          </GlassButton>
        </SectionRow>
        <FieldRow $h={64}>
          <FieldLabel htmlFor="source">Source:</FieldLabel>
          <FieldControls $left={0}>
            <SourceInput id="source" defaultValue="/vis.0/Heizung%201/img/" />
            <BrowseSlot>
              <GlassButton $w={44} $h={44} aria-label="Browse files">
                <svg width="20" height="20" viewBox="0 0 20 20">
                  <path fill={glyph} d="M5 0H18V20H5Z" />
                  <path stroke={glyph} strokeWidth="2" strokeDasharray="2 2" d="M3 0V20" />
                </svg>
              </GlassButton>
            </BrowseSlot>
          </FieldControls>
        </FieldRow>
        <FieldRow $h={48}>
          <FieldLabel htmlFor="stretch">Stretch:</FieldLabel>
          <FieldControls $left={4}>
            <CheckBox type="checkbox" id="stretch" />
          </FieldControls>
        </FieldRow>
        <FieldRow $h={72}>
          <FieldLabel htmlFor="interval" $two>
            Refresh interval(ms):
          </FieldLabel>
          <FieldControls $left={6}>
            <NumberInput id="interval" defaultValue="0" />
            <Slider type="range" aria-label="Refresh interval" min="0" max="180000" defaultValue="0" />
          </FieldControls>
        </FieldRow>
        {wideFields.map((field) => (
          <FieldRow key={field.id} $h={72}>
            <FieldLabel htmlFor={field.id} $two>
              {field.title}
            </FieldLabel>
            <FieldControls $left={4}>
              <CheckBox type="checkbox" id={field.id} />
            </FieldControls>
          </FieldRow>
        ))}
        <Divider />
        <SectionRow>
          <SectionLabel as="span">CSS Common</SectionLabel>
          <GlassButton $w={44} $h={44} aria-label="Expand CSS Common">
            <Triangle />
          </GlassButton>
        </SectionRow>
        {closedSections.map((title) => (
          <CheckSection key={title} title={title} />
        ))}
      </Sections>
    </RightPanel>
  );
}

export default function App() {
  return (
    <Page>
      <GlobalStyle />
      <BrowserChrome />
      <EditorHeader />
      <BlueBar />
      <WidgetTools />
      <Workspace>
        <WidgetPalette />
        <ViewEditor />
        <Attributes />
      </Workspace>
    </Page>
  );
}
